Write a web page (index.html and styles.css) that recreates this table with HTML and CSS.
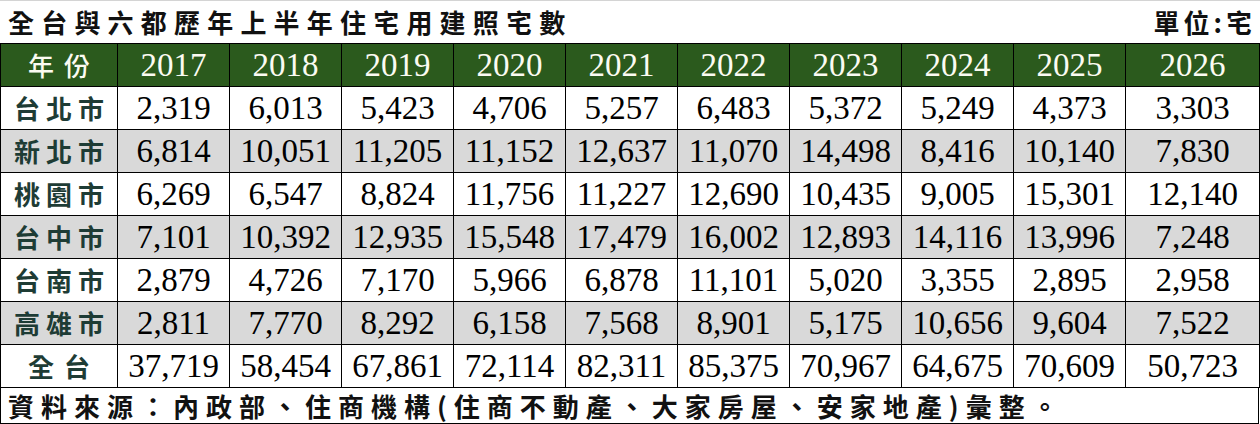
FILE: index.html
```html
<!DOCTYPE html>
<html lang="zh-Hant">
<head>
<meta charset="utf-8">
<title>全台與六都歷年上半年住宅用建照宅數</title>
<link rel="stylesheet" href="styles.css">
</head>
<body>
<div class="sheet">
  <div class="title-row">
    <div class="title">全台與六都歷年上半年住宅用建照宅數</div>
    <div class="unit">單位:宅</div>
  </div>
  <table class="grid">
    <colgroup>
      <col class="c-first">
      <col class="c-year"><col class="c-year"><col class="c-year"><col class="c-year"><col class="c-year">
      <col class="c-year"><col class="c-year"><col class="c-year"><col class="c-year">
      <col class="c-last">
    </colgroup>
    <thead>
      <tr class="head">
        <th class="label label-2">年份</th>
        <th>2017</th><th>2018</th><th>2019</th><th>2020</th><th>2021</th>
        <th>2022</th><th>2023</th><th>2024</th><th>2025</th><th>2026</th>
      </tr>
    </thead>
    <tbody>
      <tr>
        <td class="label">台北市</td>
        <td>2,319</td><td>6,013</td><td>5,423</td><td>4,706</td><td>5,257</td>
        <td>6,483</td><td>5,372</td><td>5,249</td><td>4,373</td><td>3,303</td>
      </tr>
      <tr class="shade">
        <td class="label">新北市</td>
        <td>6,814</td><td>10,051</td><td>11,205</td><td>11,152</td><td>12,637</td>
        <td>11,070</td><td>14,498</td><td>8,416</td><td>10,140</td><td>7,830</td>
      </tr>
      <tr>
        <td class="label">桃園市</td>
        <td>6,269</td><td>6,547</td><td>8,824</td><td>11,756</td><td>11,227</td>
        <td>12,690</td><td>10,435</td><td>9,005</td><td>15,301</td><td>12,140</td>
      </tr>
      <tr class="shade">
        <td class="label">台中市</td>
        <td>7,101</td><td>10,392</td><td>12,935</td><td>15,548</td><td>17,479</td>
        <td>16,002</td><td>12,893</td><td>14,116</td><td>13,996</td><td>7,248</td>
      </tr>
      <tr>
        <td class="label">台南市</td>
        <td>2,879</td><td>4,726</td><td>7,170</td><td>5,966</td><td>6,878</td>
        <td>11,101</td><td>5,020</td><td>3,355</td><td>2,895</td><td>2,958</td>
      </tr>
      <tr class="shade">
        <td class="label">高雄市</td>
        <td>2,811</td><td>7,770</td><td>8,292</td><td>6,158</td><td>7,568</td>
        <td>8,901</td><td>5,175</td><td>10,656</td><td>9,604</td><td>7,522</td>
      </tr>
      <tr>
        <td class="label label-2">全台</td>
        <td>37,719</td><td>58,454</td><td>67,861</td><td>72,114</td><td>82,311</td>
        <td>85,375</td><td>70,967</td><td>64,675</td><td>70,609</td><td>50,723</td>
      </tr>
    </tbody>
  </table>
  <div class="source">資料來源：內政部、住商機構(住商不動產、大家房屋、安家地產)彙整。</div>
</div>
</body>
</html>
```

FILE: styles.css
```css
html, body {
  margin: 0;
  padding: 0;
  background: #ffffff;
}

body {
  font-family: "Liberation Serif", "Noto Sans CJK TC", serif;
  color: #000000;
}

.sheet {
  width: 1260px;
  height: 424px;
  overflow: hidden;
  border-top: 1px solid #d4d4d4;
  box-sizing: border-box;
}

.title-row {
  height: 42px;
  display: flex;
  justify-content: space-between;
  align-items: center;
  padding: 0 4px 0 8px;
}

.title,
.unit {
  font-family: "Noto Sans CJK TC", sans-serif;
  font-size: 26px;
  font-weight: 700;
  letter-spacing: 7.2px;
  line-height: 1;
  color: #111111;
}

.unit {
  letter-spacing: 4px;
}

.grid {
  width: 1259px;
  border-collapse: collapse;
  table-layout: fixed;
}

.c-first { width: 117px; }
.c-year  { width: 112px; }
.c-last  { width: 134px; }

.grid th,
.grid td {
  border: 1px solid #000000;
  height: 42px;
  padding: 0;
  text-align: center;
  vertical-align: middle;
  font-size: 33px;
  font-weight: 400;
  line-height: 1;
  white-space: nowrap;
}

.head th {
  background: #2b5a1d;
  color: #fbfbf2;
}

.shade td {
  background: #d9d9d9;
}

.grid .label {
  font-family: "Noto Sans CJK TC", sans-serif;
  font-size: 26px;
  font-weight: 700;
  letter-spacing: 6px;
  text-indent: 6px;
  color: #1e3c35;
}

.head .label {
  color: #fbfbf2;
  font-weight: 500;
}

.grid .label-2 {
  letter-spacing: 10px;
  text-indent: 10px;
}

.source {
  width: 1259px;
  height: 36px;
  box-sizing: border-box;
  border: 1px solid #000000;
  border-top: none;
  display: flex;
  align-items: center;
  padding-left: 7px;
  font-family: "Noto Sans CJK TC", sans-serif;
  font-size: 26px;
  font-weight: 700;
  letter-spacing: 7px;
  line-height: 1;
  color: #111111;
}
```
